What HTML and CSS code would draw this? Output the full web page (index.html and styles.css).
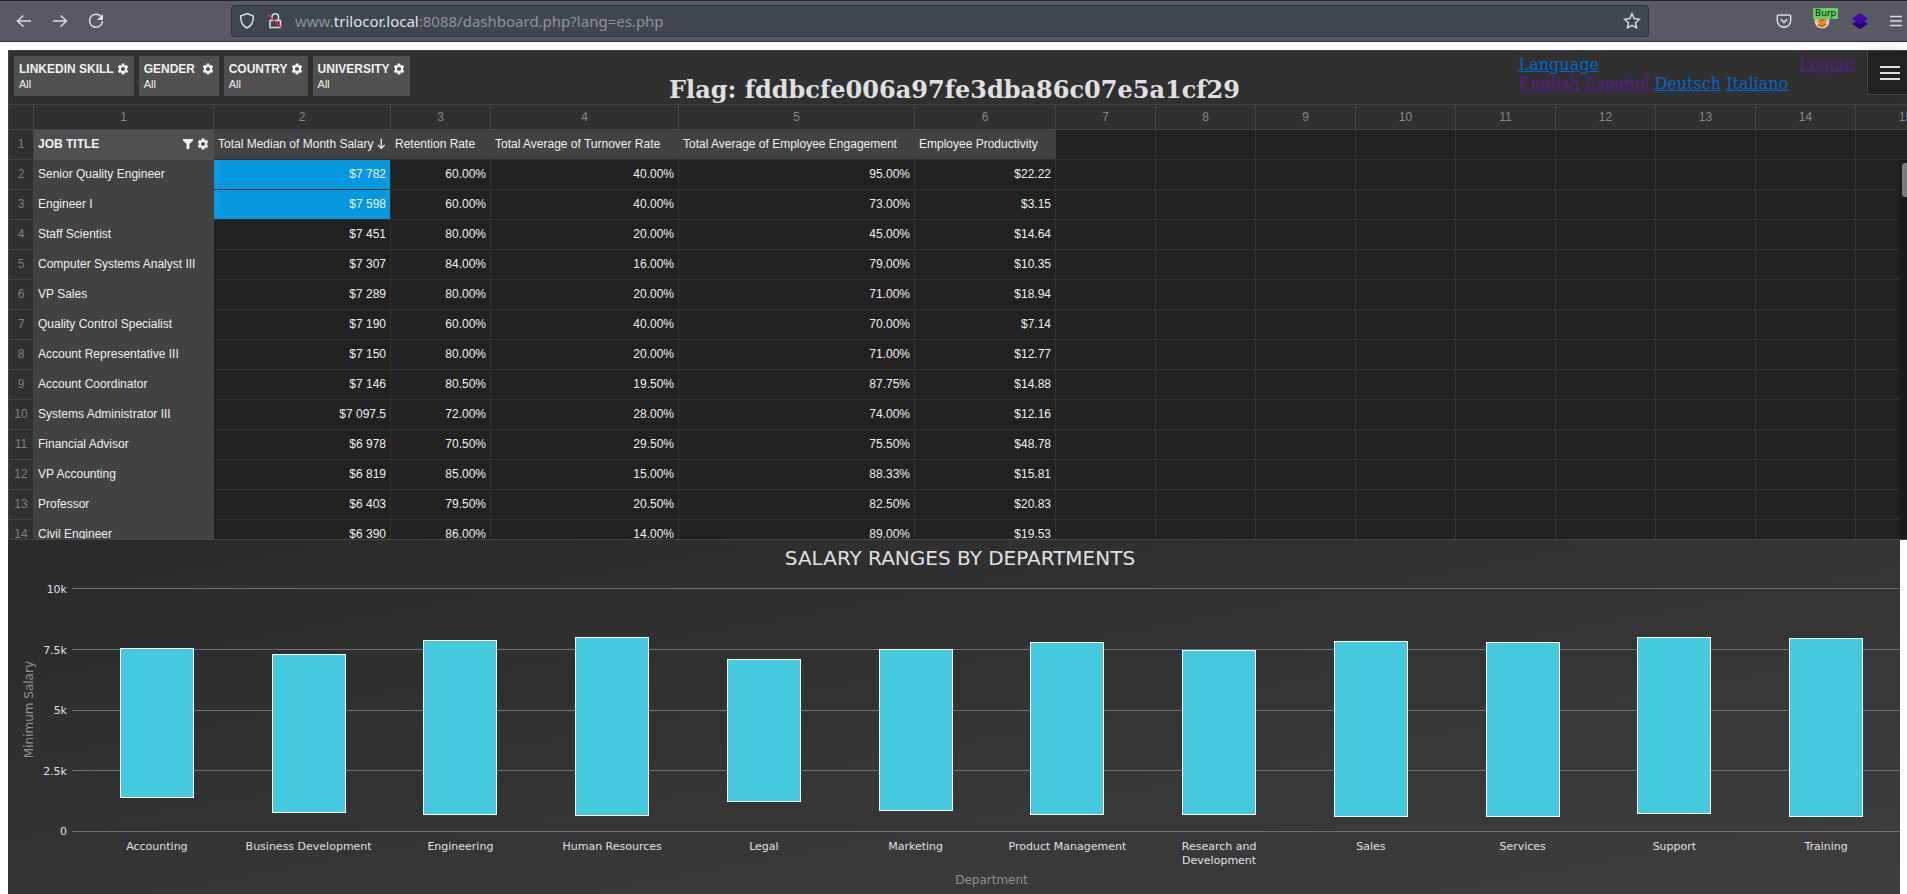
FILE: index.html
```html
<!DOCTYPE html>
<html lang="es">
<head>
<meta charset="utf-8">
<title>Trilocor dashboard</title>
<link rel="stylesheet" href="styles.css">
</head>
<body>
<svg class="defs" aria-hidden="true">
  <symbol id="gear" viewBox="0 0 24 24"><path fill="currentColor" fill-rule="evenodd" d="M9.4 1h5.2l.6 3.3 1.6.9 3.1-1.2 2.6 4.500-2.500 2.200v2.600l2.500 2.200-2.600 4.500-3.100-1.200-1.600.9-.6 3.300H9.400l-.6-3.300-1.600-.9L4.100 20l-2.600-4.500L4 13.300v-2.600L1.500 8.500 4.100 4l3.100 1.200 1.600-.9zM12 8a4 4 0 1 0 0 8 4 4 0 0 0 0-8z"/></symbol>
</svg>

<header class="browser">
  <nav class="browser-nav">
    <button class="tool" aria-label="Back"><svg width="16" height="16" viewBox="0 0 16 16"><path d="M15 8H1.500M7.500 2.500 1.500 8l6 5.500"/></svg></button>
    <button class="tool" aria-label="Forward"><svg width="16" height="16" viewBox="0 0 16 16"><path d="M1 8h13.500M8.500 2.500l6 5.500-6 5.500"/></svg></button>
    <button class="tool" aria-label="Reload"><svg width="16" height="16" viewBox="0 0 16 16"><path d="M13.500 4.200A6.500 6.500 0 1 0 14.500 8"/><path class="solid" d="M15 1v6H9z"/></svg></button>
  </nav>
  <div class="address">
    <svg width="16" height="18" viewBox="0 0 16 18"><path d="M8 1.500 14.300 4c.3 5.500-1.800 9.800-6.300 12C3.500 13.800 1.400 9.500 1.700 4z"/></svg>
    <svg width="16" height="18" viewBox="0 0 16 18"><path d="M3 8.500h10.500v7H3zM5 8.500V5a3.200 3.200 0 0 1 6.500 0v3.500"/><path class="strike" d="M1 2.500 15 16.500"/></svg>
    <span class="url">www.<b>trilocor.local</b>:8088/dashboard.php?lang=es.php</span>
    <svg width="18" height="18" viewBox="0 0 18 18"><path d="m9 1.800 2.200 4.700 5.200.7-3.800 3.500 1 5.200L9 13.400l-4.600 2.500 1-5.200L1.600 7.200l5.200-.7z"/></svg>
  </div>
  <div class="browser-tools">
    <button class="tool" aria-label="Save to Pocket"><svg width="16" height="16" viewBox="0 0 16 16"><path d="M2.500 2h11c.7 0 1.200.5 1.200 1.200V7.500a6.700 6.700 0 0 1-13.400 0V3.200C1.300 2.500 1.800 2 2.500 2zM4.800 6.300 8 9.400l3.200-3.100"/></svg></button>
    <button class="tool burp" aria-label="Burp proxy"><svg width="16" height="16" viewBox="0 0 16 16"><circle cx="8" cy="8" r="7.500" fill="#d9cdbf" stroke="none"/><path d="M3 4.500 8 2l5 3-1 4.500L8 13l-4-3z" fill="#f08a24" stroke="none"/><path d="M4 11.500 8 13.500l4-2.500M6 8l4-2" stroke="#b4551a"/></svg><span class="burp-label">Burp</span></button>
    <button class="tool" aria-label="Wappalyzer"><svg width="16" height="16" viewBox="0 0 16 16"><path d="M8 5.500 16 11l-8 5-8-5z" fill="#1d0678" stroke="none"/><path d="M8 0l8 5.700-8 5.500L0 5.700z" fill="#4608ad" stroke="none"/></svg></button>
    <button class="tool" aria-label="Application menu"><svg width="12" height="16" viewBox="0 0 12 16"><path d="M0 3.500h12M0 8h12M0 12.500h12"/></svg></button>
  </div>
</header>

<main class="page">
  <section class="pivot">
    <div class="topbar">
      <div class="filters">
        <button class="filter"><b>LINKEDIN SKILL <svg class="gear"><use href="#gear"/></svg></b><span>All</span></button>
        <button class="filter gender"><b>GENDER <svg class="gear"><use href="#gear"/></svg></b><span>All</span></button>
        <button class="filter"><b>COUNTRY <svg class="gear"><use href="#gear"/></svg></b><span>All</span></button>
        <button class="filter"><b>UNIVERSITY <svg class="gear"><use href="#gear"/></svg></b><span>All</span></button>
      </div>
      <h2 class="flag">Flag: fddbcfe006a97fe3dba86c07e5a1cf29</h2>
      <nav class="links">
        <div><a href="#">Language</a><br><a class="seen" href="#">English</a> <a class="seen" href="#">Español</a> <a href="#">Deutsch</a> <a href="#">Italiano</a></div>
        <a class="seen" href="#">Logout</a>
      </nav>
      <button class="menu" aria-label="Menu"><i></i><i></i><i></i></button>
    </div>
    <div class="sheet">
      <table class="grid" id="grid">
        <colgroup><col class="c-num"><col class="c-title"><col class="c-salary"><col class="c-unit"><col class="c-turn"><col class="c-engage"><col class="c-prod"><col class="c-unit" span="9"></colgroup>
        <thead></thead>
        <tbody></tbody>
      </table>
      <div class="scroll"><i></i></div>
    </div>
  </section>

  <section class="chart">
    <div class="chart-body">
      <h3 class="chart-title">SALARY RANGES BY DEPARTMENTS</h3>
      <div class="y-title"><span>Minimum Salary</span></div>
      <div class="y-labels"><span>10k</span><span>7.5k</span><span>5k</span><span>2.5k</span><span>0</span></div>
      <div class="lines"><i></i><i></i><i></i><i></i><i></i></div>
      <div class="bars" id="bars"></div>
      <div class="x-labels" id="labels"></div>
      <div class="x-title">Department</div>
    </div>
  </section>
</main>
<script src="app.js"></script>
</body>
</html>
```
FILE: styles.css
```css
* { box-sizing: border-box; }

body {
  margin: 0;
  height: 100vh;
  overflow: hidden;
  display: flex;
  flex-direction: column;
  background: #fff;
  font-family: "Liberation Sans", Arial, sans-serif;
  font-size: 12px;
}

button {
  margin: 0;
  padding: 0;
  border: 0;
  background: none;
  color: inherit;
  font: inherit;
  text-align: left;
}

.defs { position: absolute; width: 0; height: 0; }

/* Browser toolbar */
.browser {
  flex: none;
  height: 42px;
  display: flex;
  align-items: center;
  padding: 0 5px 0 16px;
  border-top: 1px solid #23252f;
  border-bottom: 1px solid #2b2d3a;
  background: #585965;
}
.browser svg { display: block; fill: none; stroke: #d9dce6; stroke-width: 1.5; }
.browser svg .solid { fill: #d9dce6; stroke: none; }
.browser svg .strike { stroke: #e22850; }
.browser-nav { display: flex; gap: 20px; width: 215px; }
.address {
  flex: 1;
  max-width: 1418px;
  height: 32px;
  display: flex;
  align-items: center;
  gap: 12px;
  padding: 0 7px;
  border: 1px solid #2c303c;
  border-radius: 4px;
  background: #404552;
}
.url { flex: 1; color: #8e929c; font: 15px/20px "Noto Sans", sans-serif; }
.url b { color: #dfe3ea; font-weight: 400; }
.browser-tools { display: flex; align-items: center; gap: 22px; margin-left: auto; }
.burp { position: relative; }
.burp-label {
  position: absolute;
  left: -1px;
  top: -5px;
  padding: 0 2px;
  border-radius: 1px;
  background: #66cc66;
  color: #10210f;
  font: 9px/11px "DejaVu Sans", sans-serif;
}

/* Page */
.page {
  flex: 1;
  min-height: 0;
  display: flex;
  flex-direction: column;
  padding: 8px 0 0 8px;
}
.pivot { flex: none; border: 1px solid #444; border-right: 0; background: #303030; }

.topbar {
  position: relative;
  height: 53px;
  display: grid;
  grid-template-columns: 1fr auto 1fr;
  padding: 5px 12px 0 5px;
}
.filters { display: flex; align-items: flex-start; gap: 5px; }
.filter {
  height: 40px;
  padding: 5px;
  background: #505050;
  color: #f0f0f0;
  line-height: 16px;
}
.filter b { display: flex; align-items: center; gap: 3px; justify-content: space-between; }
.filter span { display: block; font-size: 11px; line-height: 14px; }
.gender { width: 80px; }
.gear { width: 12px; height: 12px; }

.flag {
  margin: 0;
  padding-top: 20px;
  color: #e0e0e3;
  font: bold 24px/28px "DejaVu Serif", serif;
}
.links {
  display: flex;
  justify-content: flex-end;
  gap: 11px;
  margin-top: -1px;
  padding-right: 39px;
  font: 16px/19px "DejaVu Serif", serif;
}
.links a { color: #0366cc; }
.links .seen { color: #551a8b; }

.menu {
  position: absolute;
  right: 0;
  top: 0;
  width: 40px;
  height: 44px;
  display: flex;
  flex-direction: column;
  gap: 4px;
  padding: 15px 7px 0 12px;
  border-left: 1px solid #444;
  border-bottom: 1px solid #444;
  background: #212121;
  box-shadow: 0 0 16px rgba(0, 0, 0, 0.12);
}
.menu i { height: 2px; background: #e0e0e0; }

/* Spreadsheet */
.sheet {
  position: relative;
  height: 435px;
  overflow: hidden;
  border-top: 1px solid #444;
  background: #212121;
}
.grid {
  width: 1947px;
  table-layout: fixed;
  border-collapse: separate;
  border-spacing: 0;
  color: #f0f0f0;
}
.c-num { width: 25px; }
.c-title { width: 180px; }
.c-salary { width: 177px; }
.c-unit { width: 100px; }
.c-turn { width: 188px; }
.c-engage { width: 236px; }
.c-prod { width: 141px; }

.grid th, .grid td {
  height: 30px;
  padding: 0 4px 2px;
  border-right: 1px solid #303030;
  border-bottom: 1px solid #303030;
  font-weight: 400;
  text-align: right;
  white-space: nowrap;
}
.grid thead th {
  height: 25px;
  padding: 0;
  border-color: #444;
  background: #303030;
  color: #808991;
  text-align: center;
}
.grid tbody th.num {
  padding: 0 0 2px;
  border-color: #444;
  background: #303030;
  color: #808080;
  text-align: center;
}
.grid tbody th.job { border-color: #424242; background: #424242; text-align: left; }
.grid tbody th.cap { border-right-color: #424242; background: #424242; text-align: left; }
.grid tbody th.lead { border-color: #505050; background: #505050; font-weight: 700; }
.grid td.picked { background: #0598df; }
.cap-row { display: flex; align-items: center; gap: 4px; }
.cap-row span { flex: 1; }

.scroll {
  position: absolute;
  right: 0;
  top: 55px;
  bottom: 0;
  width: 8px;
  overflow: hidden;
  background: #1b1b1d;
}
.scroll i {
  display: block;
  width: 8px;
  height: 34px;
  margin: 3px;
  border-radius: 3px;
  background: #7a7a7a;
}

/* Salary range chart */
.chart {
  flex: 1;
  min-height: 0;
  margin-right: 7px;
  overflow: hidden;
  background: linear-gradient(to bottom right, #2a2a2b, #3e3e40);
  color: #e0e0e3;
  font: 11px/14px "DejaVu Sans", sans-serif;
}
.chart-body {
  height: 100%;
  margin-right: -2px;
  display: grid;
  grid-template-columns: 42px 22px 1fr;
  grid-template-rows: 48px 1fr 41px 21px;
}
.chart-title {
  grid-column: 1 / -1;
  margin: 0;
  padding: 6px 0 0 10px;
  font-weight: 400;
  font-size: 20px;
  line-height: 24px;
  text-align: center;
}
.y-title, .x-title { color: #909093; font-size: 12px; }
.y-title { display: flex; align-items: center; padding-left: 14px; }
.y-title span { writing-mode: vertical-rl; transform: rotate(180deg); }
.y-labels {
  display: flex;
  flex-direction: column;
  justify-content: space-between;
  align-items: flex-end;
  margin: -5px 5px -7px -20px;
}
.lines {
  grid-area: 2 / 3;
  display: flex;
  flex-direction: column;
  justify-content: space-between;
}
.lines i { height: 1px; background: #707073; }
.bars, .x-labels { display: grid; grid-template-columns: repeat(12, 1fr); margin-left: 9px; }
.bars { grid-area: 2 / 3; }
.bar { display: flex; flex-direction: column; align-items: center; }
.bar::before { content: ""; flex: calc(10 - var(--high)) 0 0; }
.bar i {
  flex: calc(var(--high) - var(--low)) 0 0;
  width: 74px;
  background: #45c9dc;
  box-shadow: inset 0 0 0 1px #fff;
}
.bar::after { content: ""; flex: var(--low) 0 0; }
.x-labels { grid-area: 3 / 3; padding-top: 8px; text-align: center; }
.x-labels span { padding: 0 6px; }
.x-title { grid-area: 4 / 3; margin-left: 9px; text-align: center; }
```
FILE: app.js
```js
const captions = ["Total Median of Month Salary", "Retention Rate", "Total Average of Turnover Rate", "Total Average of Employee Engagement", "Employee Productivity"];
const jobs = [
  ["Senior Quality Engineer", "$7 782", "60.00%", "40.00%", "95.00%", "$22.22"],
  ["Engineer I", "$7 598", "60.00%", "40.00%", "73.00%", "$3.15"],
  ["Staff Scientist", "$7 451", "80.00%", "20.00%", "45.00%", "$14.64"],
  ["Computer Systems Analyst III", "$7 307", "84.00%", "16.00%", "79.00%", "$10.35"],
  ["VP Sales", "$7 289", "80.00%", "20.00%", "71.00%", "$18.94"],
  ["Quality Control Specialist", "$7 190", "60.00%", "40.00%", "70.00%", "$7.14"],
  ["Account Representative III", "$7 150", "80.00%", "20.00%", "71.00%", "$12.77"],
  ["Account Coordinator", "$7 146", "80.50%", "19.50%", "87.75%", "$14.88"],
  ["Systems Administrator III", "$7 097.5", "72.00%", "28.00%", "74.00%", "$12.16"],
  ["Financial Advisor", "$6 978", "70.50%", "29.50%", "75.50%", "$48.78"],
  ["VP Accounting", "$6 819", "85.00%", "15.00%", "88.33%", "$15.81"],
  ["Professor", "$6 403", "79.50%", "20.50%", "82.50%", "$20.83"],
  ["Civil Engineer", "$6 390", "86.00%", "14.00%", "89.00%", "$19.53"]
];
const ranges = [
  ["Accounting", 1.4, 7.55], ["Business Development", 0.78, 7.29], ["Engineering", 0.68, 7.87],
  ["Human Resources", 0.66, 7.99], ["Legal", 1.22, 7.08], ["Marketing", 0.88, 7.48],
  ["Product Management", 0.68, 7.79], ["Research and Development", 0.68, 7.45], ["Sales", 0.63, 7.83],
  ["Services", 0.61, 7.78], ["Support", 0.72, 7.99], ["Training", 0.6, 7.95]
];

const blanks = "<td></td>".repeat(9);
const filterIcon = '<svg width="10" height="12" viewBox="0 0 10 12"><path fill="currentColor" d="M0 1h10v1.500L6.500 6v4.500l-3 1V6L0 2.500z"/></svg>';
const gearIcon = '<svg class="gear"><use href="#gear"/></svg>';
const sortIcon = '<svg width="10" height="12" viewBox="0 0 10 12"><path fill="none" stroke="currentColor" stroke-width="1.500" d="M5 0v11M1 7l4 4 4-4"/></svg>';

const grid = document.getElementById("grid");
grid.tHead.innerHTML = "<tr><th></th>" + Array.from({ length: 15 }, (_, i) => `<th>${i + 1}</th>`).join("") + "</tr>";
grid.tBodies[0].innerHTML =
  `<tr><th class="num">1</th><th class="job lead"><div class="cap-row"><span>JOB TITLE</span>${filterIcon}${gearIcon}</div></th>` +
  captions.map((c, i) => `<th class="cap"><div class="cap-row"><span>${c}</span>${i === 0 ? sortIcon : ""}</div></th>`).join("") + blanks + "</tr>" +
  jobs.map(([job, ...cells], r) =>
    `<tr><th class="num">${r + 2}</th><th class="job">${job}</th>` +
    cells.map((v, c) => `<td${c === 0 && r < 2 ? ' class="picked"' : ""}>${v}</td>`).join("") + blanks + "</tr>").join("");

document.getElementById("bars").innerHTML = ranges.map(([, low, high]) => `<div class="bar" style="--low:${low};--high:${high}"><i></i></div>`).join("");
document.getElementById("labels").innerHTML = ranges.map(([name]) => `<span>${name}</span>`).join("");
```
